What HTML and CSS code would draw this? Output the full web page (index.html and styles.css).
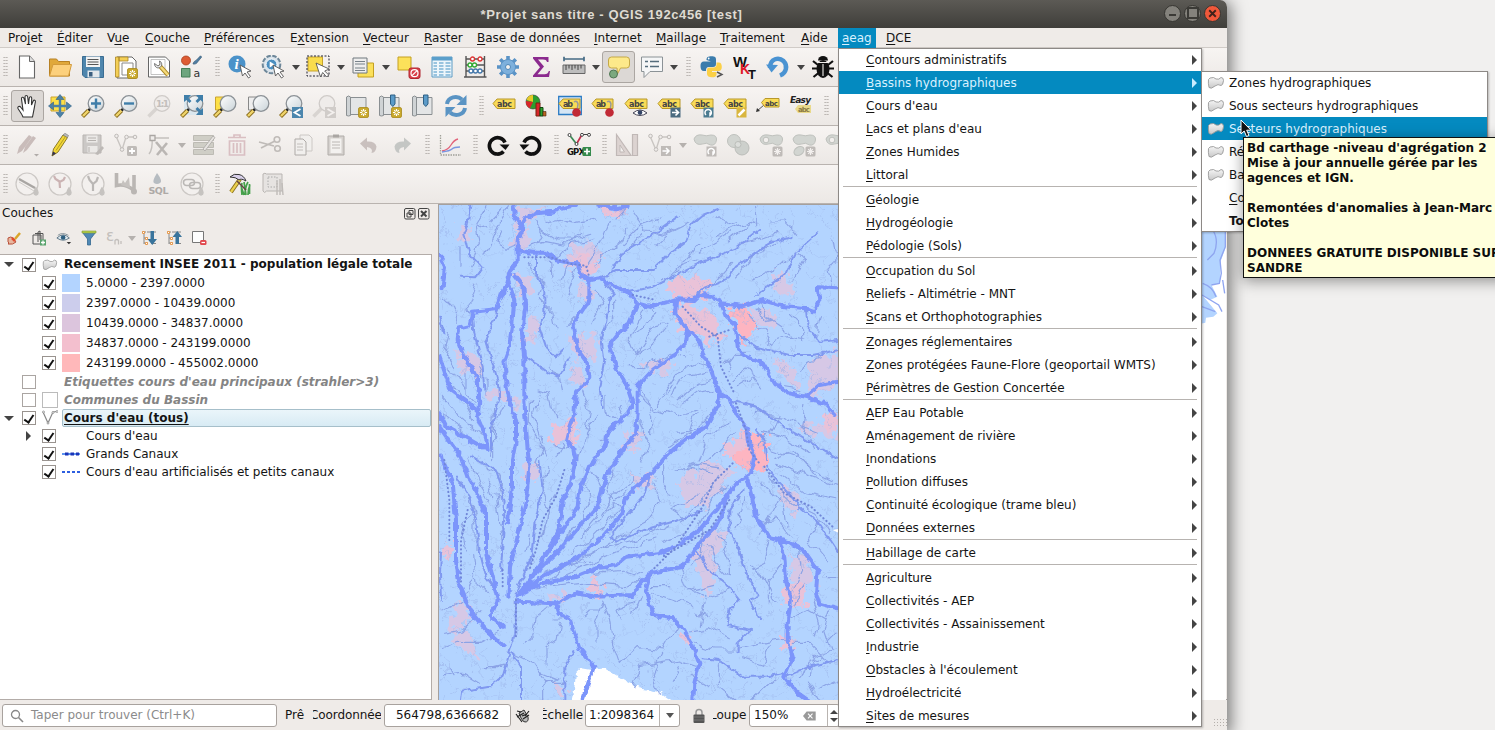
FILE: index.html
```html
<!DOCTYPE html>
<html lang="fr">
<head>
<meta charset="utf-8">
<title>*Projet sans titre - QGIS 192c456 [test]</title>
<link rel="stylesheet" href="styles.css">
</head>
<body>
<svg class="defs" width="0" height="0">
<defs>
<linearGradient id="lens" x1="0" y1="0" x2="1" y2="1"><stop offset="0" stop-color="#fff"/><stop offset="1" stop-color="#c9d3d8"/></linearGradient>
<linearGradient id="poly" x1="0" y1="0" x2="0" y2="1"><stop offset="0" stop-color="#f4f4f4"/><stop offset="1" stop-color="#c8c8c8"/></linearGradient>
<symbol id="cur" viewBox="0 0 24 24"><path d="M12 10l2.500 11 2.500-3 3.500 5 2-1.500-3.500-4.500 4-1z" fill="#fff" stroke="#555" stroke-width=".9"/></symbol>
<symbol id="star" viewBox="0 0 24 24"><rect x="13.500" y="13.500" width="10" height="10" rx="1.500" fill="#c9a92c" stroke="#a8891a" stroke-width=".8"/><path d="M18.500 15v7M15 18.500h7M16.200 16.200l4.600 4.600M20.800 16.200l-4.600 4.600" stroke="#fff" stroke-width="1.200"/><circle cx="18.500" cy="18.500" r="1.300" fill="#c9a92c"/></symbol>
<symbol id="gstar" viewBox="0 0 24 24"><rect x="13.500" y="13.500" width="10" height="10" rx="1.500" fill="#bfbbb8"/><path d="M18.500 15v7M15 18.500h7M16.200 16.200l4.600 4.600M20.800 16.200l-4.600 4.600" stroke="#f3f0ee" stroke-width="1.200"/></symbol>
<symbol id="mag" viewBox="0 0 24 24"><path d="M1.500 22.500l6-6" stroke="#8a6d1c" stroke-width="4.200"/><path d="M2 22l5.500-5.500" stroke="#f0d56c" stroke-width="2.400"/><path d="M7.500 16.500l2.300-2.300" stroke="#222" stroke-width="2.600"/><circle cx="15" cy="9.500" r="7.800" fill="url(#lens)" stroke="#8b9196" stroke-width="1.300"/></symbol>
<symbol id="gmag" viewBox="0 0 24 24"><path d="M1.500 22.500l8-8" stroke="#d8d4d1" stroke-width="3.500"/><circle cx="15" cy="9.500" r="7.800" fill="#efecea" stroke="#cfcbc8" stroke-width="1.300"/></symbol>
<symbol id="new" viewBox="0 0 24 24"><path d="M4.500 1h10l5 5.500V23h-15z" fill="#fff" stroke="#666" stroke-width="1.100"/><path d="M14.500 1v5.500h5" fill="#ddd" stroke="#666"/></symbol>
<symbol id="open" viewBox="0 0 24 24"><path d="M1.500 21V4h7l2 2.500h11V21z" fill="#e0a83a" stroke="#b78124"/><path d="M1.500 21L5 9.500h18.500L20.500 21z" fill="#fcd07c" stroke="#d39b3c"/></symbol>
<symbol id="save" viewBox="0 0 24 24"><path d="M1.500 1.500h21v21H4l-2.500-2.500z" fill="#4f86ad" stroke="#3b6d92"/><path d="M5 1.500h14V12H5z" fill="#f3f3f3"/><path d="M6.500 4.500h11M6.500 7h11M6.500 9.500h11" stroke="#555"/><path d="M6.500 15.500h12v7h-12z" fill="#e3e8ec"/><path d="M8 17h3.500v4.500H8z" fill="#3b5f80"/></symbol>
<symbol id="layout" viewBox="0 0 24 24"><path d="M3 2h15l4 4v17H3z" fill="#fff" stroke="#666"/><path d="M1.500 2h3.500v20H1.500zM5 2h9v4H5z" fill="#f4cf56" stroke="#a98523" stroke-width=".8"/><path d="M8 8h11v12H8z" fill="none" stroke="#888"/><use href="#star"/></symbol>
<symbol id="layoutmgr" viewBox="0 0 24 24"><path d="M1.500 2h17l4 4v16h-21z" fill="#fff" stroke="#666"/><path d="M4 4.500h14v15H4z" fill="none" stroke="#aaa" stroke-width=".7"/><path d="M12 10l9 10" stroke="#a98523" stroke-width="4.200"/><path d="M13 11l8 9" stroke="#f4da7a" stroke-width="2.600"/><path d="M7.500 8.500c0 4 3.500 5.500 6 3.500 2-1.700 1.500-5-1-6l.5 3.500-2 1.500z" fill="#eee" stroke="#555" stroke-width=".8"/></symbol>
<symbol id="style" viewBox="0 0 24 24"><circle cx="6" cy="5.500" r="4.500" fill="#dd5b33" stroke="#a83f1e" stroke-width=".8"/><path d="M1.500 13.500h8.500V22H1.500z" fill="#6da57e" stroke="#447d57"/><path d="M13 9c.5-2.500 2-3 3.500-4L20.500.800l1.200 1.200L18 6.500c-1 1.500-2 3-5 2.500z" fill="#4f7ea3" stroke="#3c5d78" stroke-width=".7"/><text x="13.500" y="21.500" font-size="11" fill="#333">a</text></symbol>
<symbol id="ident" viewBox="0 0 24 24"><circle cx="9" cy="9" r="8.500" fill="#4b92c9"/><text x="6.500" y="14" font-family="Liberation Serif" font-style="italic" font-weight="bold" font-size="15" fill="#fff">i</text><use href="#cur"/></symbol>
<symbol id="action" viewBox="0 0 24 24"><circle cx="10.500" cy="9.500" r="8.800" fill="#d8e2ea" stroke="#6d8799" stroke-width="2" stroke-dasharray="4.500 1.500"/><circle cx="10.500" cy="9.500" r="5.500" fill="#4b8fc0" stroke="#fff"/><path d="M8.700 6.500l5 3-5 3z" fill="#fff"/><use href="#cur"/></symbol>
<symbol id="select" viewBox="0 0 24 24"><path d="M2 2h14.500v14H2z" fill="#f9dc4d" stroke="#c7a42c"/><path d="M1 1h22v20H1z" fill="none" stroke="#223" stroke-width="1" stroke-dasharray="2 1.500"/><path d="M10 8l4.500 14 2.200-4.500 4 4.500 2-2-4-4 4.500-2z" fill="#fff" stroke="#555" stroke-width=".9"/></symbol>
<symbol id="form" viewBox="0 0 24 24"><path d="M7 8h15.500v14H7z" fill="#fbe05a" stroke="#c4a021"/><path d="M2 3h14v15H2z" fill="#eee" stroke="#71797f"/><path d="M4 6.500h10M4 9h10M4 13h10M4 15.500h10" stroke="#77828a"/></symbol>
<symbol id="desel" viewBox="0 0 24 24"><path d="M1 2h13v13H1z" fill="#fce15a" stroke="#c4a021"/><rect x="12" y="13" width="11" height="10.500" rx="2" fill="#d9414b" stroke="#b02630"/><circle cx="17.500" cy="18.200" r="3.500" fill="none" stroke="#fff" stroke-width="1.200"/><path d="M15 20.700l5-5" stroke="#fff" stroke-width="1.200"/></symbol>
<symbol id="table" viewBox="0 0 24 24"><path d="M2 2h20v20H2z" fill="#eef6fb" stroke="#5a9bc4"/><path d="M2 2h20v3.500H2z" fill="#5b9fcb"/><path d="M3.500 8h3.500M9 8h4.500M15.500 8h5M3.500 11h3.500M9 11h4.500M15.500 11h5M3.500 14h3.500M9 14h4.500M15.500 14h5M3.500 17h3.500M9 17h4.500M15.500 17h5M3.500 20h3.500M9 20h4.500M15.500 20h5" stroke="#7db4d6" stroke-width="1.300"/></symbol>
<symbol id="abacus" viewBox="0 0 24 24"><path d="M3 1v21M21.500 1v21M1 22h22.500M3 4h18M3 10h18M3 16h18" fill="none" stroke="#555" stroke-width="1.400"/><g fill="#fff" stroke-width="1.300"><g stroke="#d33"><circle cx="9.500" cy="4" r="2"/><circle cx="17" cy="4" r="2"/></g><g stroke="#3a3"><circle cx="7" cy="10" r="2"/><circle cx="11.500" cy="10" r="2"/></g><g stroke="#47a"><circle cx="8" cy="16" r="2"/><circle cx="12.500" cy="16" r="2"/><circle cx="17" cy="16" r="2"/></g></g></symbol>
<symbol id="gear" viewBox="0 0 24 24"><path d="M12 1v22M1 12h22M4.200 4.200l15.600 15.600M19.800 4.200L4.200 19.800" stroke="#5a93c6" stroke-width="3.600"/><circle cx="12" cy="12" r="7.500" fill="#7db0dc" stroke="#5a93c6"/><circle cx="12" cy="12" r="2.500" fill="#f4f2f0" stroke="#4d86b8"/></symbol>
<symbol id="sigma" viewBox="0 0 24 24"><path d="M4 2h15.500v5H18c-.6-2-1.600-2.600-4-2.600H9l6 7.200-6.500 7.600h7c2.500 0 3.500-1 4.300-3.200H21L20 22H4v-1.500l7-8.300L4 3.500z" fill="#8b2a8e"/></symbol>
<symbol id="ruler" viewBox="0 0 24 24"><path d="M2 4h20M2 1.800v4.500M22 1.800v4.500" stroke="#456b85" stroke-width="1.700"/><path d="M1 10h22v8.500H1z" fill="#bdbdbd" stroke="#666"/><path d="M4 10v5M7 10v3.500M10 10v5M13 10v3.500M16 10v5M19 10v3.500" stroke="#444"/></symbol>
<symbol id="tip" viewBox="0 0 24 24"><path d="M4.500 2h15q3 0 3 3v5q0 3-3 3h-6l-3 6-.5-6H4.500q-3 0-3-3V5q0-3 3-3z" fill="#fde98a" stroke="#c5a947"/><circle cx="6.500" cy="19" r="4" fill="#7ba97f" stroke="#4f7653"/></symbol>
<symbol id="annot" viewBox="0 0 24 24"><path d="M1.500 2h21v14.500H10l-6 6v-6H1.500z" fill="#f5f6f7" stroke="#8b9296"/><path d="M5 6.500h3M10 6.500h9M5 11.500h3M10 11.500h9" stroke="#546c7c" stroke-width="1.600"/></symbol>
<symbol id="python" viewBox="0 0 24 24"><path d="M6.500 5c0-3 1.500-3.800 5-3.800S16 2 16 4.500V9c0 2-1 3-3 3H9c-2.500 0-3 1.500-3 4H4c-2.500 0-3.500-2-3.500-5s1-4.500 3.500-4.500h7" fill="#3b7cac"/><path d="M16.500 7.500h2.300c2.200 0 3 2 3 4.500 0 2-1 4-3 4H12v1h4.500v2.500c0 2-2 2.800-4.700 2.800S7 21 7 19v-4c0-1.800 1.200-2.500 3-2.500h3.500c2 0 3-1.200 3-3z" fill="#fbd046"/><circle cx="8.700" cy="3.500" r=".9" fill="#fff"/><path d="M17 17l5 2.500-5 2.500" fill="none" stroke="#555" stroke-width="1.400"/></symbol>
<symbol id="wkt" viewBox="0 0 24 24"><g font-family="Liberation Sans" font-weight="bold"><text x="0" y="11.500" font-size="14.500" textLength="14" lengthAdjust="spacingAndGlyphs" fill="#111">W</text><text x="7" y="19" font-size="15" textLength="10" lengthAdjust="spacingAndGlyphs" fill="#e01828">K</text><text x="15" y="23.500" font-size="13" fill="#111">T</text></g></symbol>
<symbol id="undo" viewBox="0 0 24 24"><path d="M4 13C4 3 13 2 17.500 6c4.500 4.500 3 12-3.500 14.500" fill="none" stroke="#4a93d2" stroke-width="4.500"/><path d="M0 9.500l12 .5-6.500 7.500z" fill="#4a93d2"/></symbol>
<symbol id="bug" viewBox="0 0 24 24"><ellipse cx="12" cy="14" rx="6.500" ry="9" fill="#111"/><path d="M7 5.500a5 4.500 0 0 1 10 0z" fill="#111"/><path d="M2 6l5 4M22 6l-5 4M1 13.500h5M23 13.500h-5M2.500 22l5-4M21.500 22l-5-4" stroke="#111" stroke-width="2.200"/><path d="M12 9v12M7 7.500h10" stroke="#f1eeec" stroke-width="1.100"/></symbol>
<symbol id="hand" viewBox="0 0 24 24"><path d="M8 23c-1-3-4-6.500-5-8.500-.8-2 1.500-3 3-1l2 2.500L6.500 5c-.3-2 2-2.500 2.500-.6L10.500 10 10 3c0-2 2.500-2 2.700 0l.8 7 .8-6c.3-1.800 2.500-1.500 2.400.2L16.500 11l1.700-4c.8-1.500 2.500-.8 2.200.8-.7 3-1 6-1.700 9L17.500 23z" fill="#fff" stroke="#333" stroke-width="1.100"/></symbol>
<symbol id="pansel" viewBox="0 0 24 24"><path d="M3 3h14v14H3z" fill="#fde047" stroke="#caa32e"/><path d="M12 6v12M6 12h12" stroke="#4b82a8" stroke-width="2.400"/><path d="M12 .500l4 5H8zM12 23.500l4-5H8zM.500 12l5-4v8zM23.500 12l-5-4v8z" fill="#4b82a8" stroke="#2f5f82" stroke-width=".6"/></symbol>
<symbol id="zin" viewBox="0 0 24 24"><use href="#mag"/><path d="M15 4.500v10M10 9.500h10" stroke="#3f7ea9" stroke-width="2.400"/></symbol>
<symbol id="zout" viewBox="0 0 24 24"><use href="#mag"/><path d="M10 9.500h10" stroke="#3f7ea9" stroke-width="2.400"/></symbol>
<symbol id="z11" viewBox="0 0 24 24"><use href="#gmag"/><text x="9" y="13" font-size="9" font-weight="bold" fill="#c3bfbc" textLength="13">1:1</text></symbol>
<symbol id="zfull" viewBox="0 0 24 24"><path d="M4 1h19v20H4z" fill="#dbe7ee"/><use href="#mag"/><path d="M4 1h7L8.500 4l3 3-2 2-3-3L4 8zM23 1h-7l2.500 3-3 3 2 2 3-3L23 8zM23 21h-7l2.500-3-3-3 2-2 3 3L23 14z" fill="#3f7ea9"/></symbol>
<symbol id="zsel" viewBox="0 0 24 24"><path d="M2.500 3h12v13h-12z" fill="#fde047" stroke="#caa32e"/><use href="#mag"/></symbol>
<symbol id="zlay" viewBox="0 0 24 24"><path d="M2.500 3h12v13h-12z" fill="#eee" stroke="#888"/><use href="#mag"/></symbol>
<symbol id="zlast" viewBox="0 0 24 24"><use href="#mag"/><path d="M13 13h11v11H13z" fill="#4b86ad"/><path d="M21.500 15l-6 3.500 6 3.500" fill="none" stroke="#fff" stroke-width="1.800"/></symbol>
<symbol id="znext" viewBox="0 0 24 24"><use href="#gmag"/><path d="M13 13h11v11H13z" fill="#d0ccc9"/><path d="M15.500 15l6 3.500-6 3.500" fill="none" stroke="#f3f0ee" stroke-width="1.800"/></symbol>
<symbol id="map" viewBox="0 0 24 24"><path d="M5 3.500h16v17H5z" fill="#e3e5e6" stroke="#8a8f92"/><path d="M1.500 3q2-2 4 0v18.500q-2 1-4 0z" fill="#cfd3d5" stroke="#8a8f92"/></symbol>
<symbol id="newmap" viewBox="0 0 24 24"><use href="#map"/><use href="#star"/></symbol>
<symbol id="mark" viewBox="0 0 24 24"><path d="M12.500 1h4.500v9l-2.200 2.500-2.300-2.500z" fill="#5b9bc9" stroke="#2f6085"/></symbol>
<symbol id="newbm" viewBox="0 0 24 24"><use href="#map"/><use href="#mark"/><use href="#star"/></symbol>
<symbol id="bm" viewBox="0 0 24 24"><use href="#map"/><use href="#mark"/></symbol>
<symbol id="refresh" viewBox="0 0 24 24"><path d="M3 10C4 3 13 1 18 5.500M21 14c-1 7-10 9-15 4.500" fill="none" stroke="#5a94c4" stroke-width="4"/><path d="M22.500 1v10h-10zM1.500 23V13h10z" fill="#5a94c4"/></symbol>
<symbol id="abc" viewBox="0 0 24 24"><path d="M1 9.500l4-4.500h18v9.500H5z" fill="#f9db57" stroke="#b8982a"/><text x="5" y="12.500" font-size="8" font-weight="bold" fill="#444" textLength="15">abc</text></symbol>
<symbol id="ab" viewBox="0 0 24 24"><path d="M1 9.500l4-4.500h17v9.500H5z" fill="#f9db57" stroke="#b8982a"/><text x="5" y="12.500" font-size="8" font-weight="bold" fill="#444" textLength="10">ab</text></symbol>
<symbol id="dia" viewBox="0 0 24 24"><circle cx="8" cy="8" r="7" fill="#2ba02f" stroke="#333" stroke-width=".6"/><path d="M8 8V1a7 7 0 0 0-6.500 5z" fill="#e6c829"/><path d="M8 8L5 14.300A7 7 0 0 1 1 7z" fill="#d8262b"/><path d="M11 9h4v13h-4z" fill="#d8262b" stroke="#721"/><path d="M15 13.500h3v8.500h-3z" fill="#2ba02f" stroke="#141"/><path d="M18 17.500h3v4.500h-3z" fill="#b62" stroke="#421" stroke-width=".6"/></symbol>
<symbol id="pin" viewBox="0 0 24 24"><path d="M16 8q3-2 4 2l-1 7" fill="none" stroke="#999" stroke-width="1.500"/><circle cx="18.500" cy="18.500" r="4.300" fill="#c12a36"/></symbol>
<symbol id="abpinb" viewBox="0 0 24 24"><path d="M.7 2.500h22.600v18H.7z" fill="#d5e6f5" stroke="#2b7bc4" stroke-width="1.300"/><use href="#ab"/><use href="#pin"/></symbol>
<symbol id="abpin" viewBox="0 0 24 24"><use href="#ab"/><use href="#pin"/></symbol>
<symbol id="abeye" viewBox="0 0 24 24"><use href="#abc"/><path d="M9 19q7-6 14 0q-7 5-14 0z" fill="#fff" stroke="#445"/><circle cx="16" cy="18.600" r="2.300" fill="#346"/></symbol>
<symbol id="abmove" viewBox="0 0 24 24"><use href="#abc"/><path d="M13.500 13.500h10v10h-10z" fill="#4b6b80"/><path d="M15 18.500h6M18.500 15.500l3 3-3 3" fill="none" stroke="#fff" stroke-width="1.700"/></symbol>
<symbol id="abrot" viewBox="0 0 24 24"><use href="#abc"/><path d="M13.500 13.500h10v10h-10z" fill="#4b7b90"/><path d="M16 21a3.200 3.200 0 1 1 4 .3v-3" fill="none" stroke="#fff" stroke-width="1.500"/></symbol>
<symbol id="abedit" viewBox="0 0 24 24"><use href="#abc"/><path d="M13.500 13.500h10v10h-10z" fill="#d9b63f"/><path d="M15.500 21.500l6-6" stroke="#fff" stroke-width="2.500"/></symbol>
<symbol id="abline" viewBox="0 0 24 24"><path d="M1 17l7-6" stroke="#555"/><path d="M0 18l1-4 3 3z" fill="#333"/><path d="M5.500 8.500L9 4.500h14V13H9z" fill="#f9db57" stroke="#b8982a"/><text x="9" y="11.500" font-size="7" font-weight="bold" fill="#444" textLength="13">abc</text></symbol>
<symbol id="easy" viewBox="0 0 24 24"><text x="1" y="8.500" font-size="9" font-weight="bold" font-style="italic" fill="#222" textLength="21">Easy</text><path d="M6 15l3-4h13v8H9z" fill="#ead98a"/><text x="9" y="17.500" font-size="7" font-weight="bold" fill="#8a7b45" textLength="12">abc</text></symbol>
<symbol id="gpens" viewBox="0 0 24 24"><path d="M2 21l2-7L14 2l3 2L7 18zM8 20l2-6 8-11 3 2-9 12z" fill="#c9bcba"/><path d="M19 21h5l-2.500 2.500z" fill="#b0aba8"/></symbol>
<symbol id="pen" viewBox="0 0 24 24"><path d="M4 23l1.500-7L15 2l4.500 2.500L10 19z" fill="#f3d737" stroke="#8b7a28"/><path d="M15 2l4.500 2.500 1-2L17 .3z" fill="#bbb" stroke="#777" stroke-width=".6"/><path d="M8 17.500L17.500 3.500" stroke="#b49f22"/><path d="M4 23l1-4.500 3 1.800z" fill="#335"/></symbol>
<symbol id="gsave" viewBox="0 0 24 24"><path d="M2 2h18v18H2z" fill="#cbc8c6" stroke="#b9b5b2"/><path d="M5.500 2.500h11v7h-11zM6.500 13h10v6.500h-10z" fill="#ebe9e7"/><path d="M7 5h8M7 7.500h8M8 14v5" stroke="#b5b1ae"/><path d="M14 21l7-8 2 2-6 7z" fill="#bdb9b6"/></symbol>
<symbol id="gvec" viewBox="0 0 24 24"><path d="M2 3l6 14 4-13h9" fill="none" stroke="#c9c5c2" stroke-width="1.400"/><g fill="#efecea" stroke="#bfbbb8"><circle cx="2.500" cy="3" r="1.800"/><circle cx="8" cy="16.500" r="1.800"/><circle cx="12.500" cy="4" r="1.800"/><circle cx="21" cy="4" r="1.800"/></g></symbol>
<symbol id="gvecadd" viewBox="0 0 24 24"><use href="#gvec"/><rect x="13" y="13" width="10" height="10" rx="1.500" fill="#bfbbb8"/><path d="M18 15v6M15 18h6" stroke="#fff" stroke-width="1.800"/></symbol>
<symbol id="gvecmv" viewBox="0 0 24 24"><use href="#gvec"/><path d="M13 13h10v10H13z" fill="#bfbbb8"/><path d="M14.500 18h6M18 15l3 3-3 3" fill="none" stroke="#fff" stroke-width="1.500"/></symbol>
<symbol id="gvert" viewBox="0 0 24 24"><path d="M2 21Q6 16 5 5h17" fill="none" stroke="#c4c0bd" stroke-width="1.400"/><path d="M3 2.500h5v5H3z" fill="#efecea" stroke="#aaa6a3" stroke-width="1.300"/><path d="M9 9l11 13M20 10L10 22" stroke="#bab6b3" stroke-width="2.600"/></symbol>
<symbol id="gmulti" viewBox="0 0 24 24"><path d="M1.500 2.500h20v5h-20zM1.500 9.500h20v5h-20zM1.500 16.500h20v5h-20z" fill="#cfcec6" stroke="#bdbbb4"/><path d="M11 16L21 3l2 1.500L13 18z" fill="#e6e3e0" stroke="#aaa7a4" stroke-width=".8"/></symbol>
<symbol id="gtrash" viewBox="0 0 24 24"><path d="M4.500 8h15v14h-15zM3 4.500h18M9 4.500V2h6v2.500M8.500 10v10M12 10v10M15.500 10v10" fill="none" stroke="#d9bfc2" stroke-width="1.700"/></symbol>
<symbol id="gcut" viewBox="0 0 24 24"><path d="M1 9l15 4M3 15l14-7" stroke="#bfbbb8" stroke-width="1.800"/><circle cx="19" cy="6.500" r="2.800" fill="none" stroke="#bfbbb8" stroke-width="1.600"/><circle cx="19.500" cy="15.500" r="2.800" fill="none" stroke="#bfbbb8" stroke-width="1.600"/></symbol>
<symbol id="gcopy" viewBox="0 0 24 24"><path d="M9 2h9l3 3v13H9z" fill="#f1efed" stroke="#ccc8c5"/><path d="M4 6h8l3 3v13H4z" fill="#f1efed" stroke="#aeaaa7"/><path d="M6 11h6M6 14h6M6 17h6" stroke="#c2bebb"/></symbol>
<symbol id="gpaste" viewBox="0 0 24 24"><path d="M4 3h16v19H4z" fill="#d5d1ce" stroke="#b1ada9"/><path d="M6.500 5.500h11v14.500h-11z" fill="#f3f1ef"/><path d="M9 1.500h6v3H9z" fill="#aaa6a3"/><path d="M8 9h8M8 12h8M8 15h8" stroke="#bbb7b4"/></symbol>
<symbol id="gundo" viewBox="0 0 24 24"><path d="M3 10.500L10 4.500v4q8-.5 9.500 5-.5 6-5 6.500 2-5-4.500-6v3.500z" fill="#c9c0be"/></symbol>
<symbol id="gredo" viewBox="0 0 24 24"><path d="M21 10.500L14 4.500v4q-8-.5-9.500 5 .5 6 5 6.500-2-5 4.500-6v3.500z" fill="#c4c6c4"/></symbol>
<symbol id="chart" viewBox="0 0 24 24"><path d="M2.500 2v20H23" fill="none" stroke="#a0a098" stroke-width="1.300" stroke-dasharray="1.500 1"/><path d="M4 18q6-1 9-6t7-6" fill="none" stroke="#e2637a" stroke-width="1.300"/><path d="M4 19q8-1 10-3t8-2" fill="none" stroke="#7b96e0" stroke-width="1.300"/></symbol>
<symbol id="rotr" viewBox="0 0 24 24"><path d="M17.500 18.500A8.200 8.200 0 1 1 19 9.500" fill="none" stroke="#111" stroke-width="3.600"/><path d="M13.500 11.500h10l-4 5.500z" fill="#111"/></symbol>
<symbol id="rotl" viewBox="0 0 24 24"><path d="M6.500 18.500A8.200 8.200 0 1 0 5 9.500" fill="none" stroke="#111" stroke-width="3.600"/><path d="M10.500 11.500H.500l4 5.500z" fill="#111"/></symbol>
<symbol id="gpx" viewBox="0 0 24 24"><path d="M2.500 2l7 9" stroke="#3a8a55" stroke-width="1.700"/><path d="M9.500 11L15 1.500" stroke="#c3304d" stroke-width="1.700"/><path d="M15 1.500h7" stroke="#444"/><g fill="#fff" stroke="#444"><circle cx="2.500" cy="2" r="1.500"/><circle cx="9.500" cy="11" r="1.500"/><circle cx="15" cy="1.800" r="1.500"/><circle cx="22" cy="1.800" r="1.500"/></g><text x="0" y="22" font-size="8.500" font-weight="bold" fill="#111" textLength="18">GPX</text><rect x="15.500" y="14" width="9" height="9" rx="1" fill="#358a4c"/><path d="M20 15.500v6M17 18.500h6" stroke="#fff" stroke-width="1.700"/></symbol>
<symbol id="gtri" viewBox="0 0 24 24"><path d="M1.500 1.500L16 22.500H1.500zM17.500 1.500h5v21h-5z" fill="#dcd3d1" stroke="#c0b8b6" stroke-width="1.200"/><path d="M5 12l4.500 7H5z" fill="#f3f0ee" stroke="#c0b8b6"/></symbol>
<symbol id="gblob" viewBox="0 0 24 24"><path d="M1 6q2-5 8-4 4 1.500 9 0 6 0 5.500 5-1 6-6 5-4-3-8-1-7 2-8.500-5z" fill="#d2d5d1" stroke="#bfc1bd"/></symbol>
<symbol id="gb1" viewBox="0 0 24 24"><use href="#gblob"/><path d="M13.500 13.500h10v10h-10z" fill="#bfbbb8"/><path d="M16 21a3.200 3.200 0 1 1 4 .3v-3" fill="none" stroke="#fff" stroke-width="1.500"/></symbol>
<symbol id="gb2" viewBox="0 0 24 24"><circle cx="8" cy="8" r="6.500" fill="#d2d5d1" stroke="#bfc1bd"/><circle cx="16" cy="15" r="7" fill="#cdd0cc" stroke="#bbbdb9"/><circle cx="12" cy="11.500" r="3" fill="#dcdedb" stroke="#bbbdb9"/></symbol>
<symbol id="gb3" viewBox="0 0 24 24"><use href="#gblob"/><circle cx="7" cy="7" r="2.800" fill="#f2efed" stroke="#bfc1bd"/><use href="#gstar"/></symbol>
<symbol id="gb4" viewBox="0 0 24 24"><use href="#gblob"/><ellipse cx="7" cy="18" rx="5.500" ry="4" fill="#d2d5d1" stroke="#bfc1bd" transform="rotate(-35 7 18)"/><use href="#gstar"/></symbol>
<symbol id="gcirc" viewBox="0 0 24 24"><circle cx="12" cy="12" r="11" fill="#f3f0ee" stroke="#ccc8c5" stroke-width="1.200"/><path d="M21 16q4 6 0 7-4-1 0-7z" fill="#c6c3c0" stroke="#c6c3c0" stroke-width="1.500"/></symbol>
<symbol id="gc1" viewBox="0 0 24 24"><use href="#gcirc"/><path d="M4 7l16 9" stroke="#a9a6a3" stroke-width="2.300"/><path d="M4 10l15 9" stroke="#cfccc9"/></symbol>
<symbol id="gc2" viewBox="0 0 24 24"><use href="#gcirc"/><path d="M6 4l1.500 3 4 2.500L12 16M17 5l-1.500 3-4 2" fill="none" stroke="#cbb3b3" stroke-width="2.200"/></symbol>
<symbol id="gc3" viewBox="0 0 24 24"><use href="#gcirc"/><path d="M7 4l1.500 4 3.500 4v7M17 5l-1.500 4-3.500 3" fill="none" stroke="#bab7b5" stroke-width="2.200"/></symbol>
<symbol id="gw" viewBox="0 0 24 24"><path d="M2.500 1v12.500q9-2 17.500 5V3" fill="none" stroke="#bab6b3" stroke-width="3.600"/><path d="M7 13l2-5 2 3 4-6 1 11z" fill="#c6c2bf"/><circle cx="20" cy="19.500" r="3" fill="#bab6b3"/></symbol>
<symbol id="gsql" viewBox="0 0 24 24"><path d="M10 1q6 8 3 10-3 2-6 0-2-2 3-10z" fill="#b6bcc1"/><text x="1.500" y="22" font-size="9.500" font-weight="bold" fill="#aeaaa7" textLength="20">SQL</text></symbol>
<symbol id="gc4" viewBox="0 0 24 24"><use href="#gcirc"/><rect x="3.500" y="7.500" width="11" height="6" rx="3" fill="none" stroke="#bab7b5" stroke-width="1.500"/><rect x="9.500" y="10.500" width="11" height="6" rx="3" fill="none" stroke="#bab7b5" stroke-width="1.500"/></symbol>
<symbol id="reed" viewBox="0 0 24 24"><path d="M14 23q-1-8 0-12M17 23q0-8 3-13M20 23q0-6 2-10M16 23l-3-9M18 23l-2-13M21.500 22V12" fill="none" stroke="#46a04b" stroke-width="1.700"/><path d="M3 20L12 7" stroke="#8a701c" stroke-width="4"/><path d="M3 20L12 7" stroke="#ecd14e" stroke-width="2.200"/><path d="M2 5q4-4 9-2.500 5 1 7 6.500-5-3-7-1-3-3-9-3z" fill="#d7cfe8" stroke="#333"/><path d="M9 9l9 9" stroke="#644" stroke-width="1.500"/></symbol>
<symbol id="greed" viewBox="0 0 24 24"><path d="M2 2q2-1.500 3.500 0H21v17H5.500q-2 3-3.500 0z" fill="#e6e3e1" stroke="#b9b5b2"/><path d="M7 5h9v10H7z" fill="none" stroke="#aaa" stroke-dasharray="1.500 1.500"/><path d="M16 23V9M19 23V7M22 23l-1-12" stroke="#bfbbb8" stroke-width="1.400"/></symbol>
<symbol id="polyl" viewBox="0 0 18 14"><path d="M3 2q4-1.500 6 1 3 1 5-1.500 2.500 0 2.500 3-.5 5-2.500 5-3-2-6 .5Q4 13.500 2 11.500 1 7 1.500 3.500z" fill="url(#poly)" stroke="#999" stroke-width=".9"/></symbol>
<symbol id="brush" viewBox="0 0 16 16"><path d="M2 8q3-2 5 0l3 4q-3 3-8 2 2-1 0-2z" fill="#e8b7a0" stroke="#b8523b"/><path d="M6 8l3 3" stroke="#e04d2e" stroke-width="2.500"/><path d="M9 9l5-6" stroke="#d9a52a" stroke-width="2.500"/></symbol>
<symbol id="addg" viewBox="0 0 16 16"><path d="M2 5h8v9H2zM4 3.500h8M12 3.500V11M7 12V2l2-1v9" fill="none" stroke="#555"/><rect x="9" y="9.500" width="6" height="6" fill="#5aa36d"/><path d="M12 10.500v4M10 12.500h4" stroke="#fff" stroke-width="1.300"/></symbol>
<symbol id="eye" viewBox="0 0 18 16"><path d="M1 8q7-7 14 0-7 5-14 0z" fill="#dfe9ef" stroke="#556f80"/><circle cx="8" cy="7.500" r="2.600" fill="#2e5f80"/><path d="M2 5q5-4 12 0" fill="none" stroke="#7d8b93"/><path d="M12 12.500h5L14.500 15z" fill="#333"/></symbol>
<symbol id="filter" viewBox="0 0 16 16"><path d="M1.500 2.500L6.500 9v6h3V9l5-6.500z" fill="#4f88b5" stroke="#34678f" stroke-width=".8"/><path d="M1 1h14v2H1z" fill="#b8d34c" stroke="#7e9431" stroke-width=".6"/></symbol>
<symbol id="eps" viewBox="0 0 18 16"><text x="0" y="11" font-size="15" fill="#c3bfbc">ε</text><path d="M9 14.500v-4q2-2 3.500 0v4M15 14v-3" fill="none" stroke="#c3bfbc" stroke-width="1.300"/></symbol>
<symbol id="down" viewBox="0 0 16 16"><path d="M1 2h4M3 2v12M3 8h4M3 13h4M6 2h9M10 13.500h5" stroke="#888" fill="none"/><path d="M1.500 1.500h2v2h-2zM4.500 7.500h2v2h-2zM4.500 12.500h2v2h-2z" fill="#fff" stroke="#e79a4e"/><path d="M9.500 1h3.500v8H16l-4.700 6L6.500 9h3z" fill="#39749c"/></symbol>
<symbol id="up" viewBox="0 0 16 16"><path d="M1 2h4M3 2v12M3 8h4M3 13h4M6 2h9M10 13.500h5" stroke="#888" fill="none"/><path d="M1.500 1.500h2v2h-2zM4.500 7.500h2v2h-2zM4.500 12.500h2v2h-2z" fill="#fff" stroke="#e79a4e"/><path d="M9.500 14h3.500V7H16L11.300 1 6.500 7h3z" fill="#39749c"/></symbol>
<symbol id="rem" viewBox="0 0 16 16"><path d="M1.500 1.500h11v11h-11z" fill="#fdfdfd" stroke="#777"/><rect x="9" y="10" width="6.500" height="5" rx="1.500" fill="#e0474c"/><path d="M10.500 12.500h3.500" stroke="#fff" stroke-width="1.200"/></symbol>
</defs>
</svg>

<main class="screen">
<section class="window">
<header class="titlebar"><span class="title">*Projet sans titre - QGIS 192c456 [test]</span>
<span class="controls"><i class="wb min"></i><i class="wb max"></i><i class="wb close"><svg viewBox="0 0 16 16"><path d="M4.500 4.500l7 7M11.500 4.500l-7 7" stroke="#40211a" stroke-width="2"/></svg></i></span></header>
<nav class="menubar"><span>Pro<u>j</u>et</span><span><u>É</u>diter</span><span>V<u>u</u>e</span><span><u>C</u>ouche</span><span><u>P</u>références</span><span>E<u>x</u>tension</span><span><u>V</u>ecteur</span><span><u>R</u>aster</span><span><u>B</u>ase de données</span><span><u>I</u>nternet</span><span><u>M</u>aillage</span><span><u>T</u>raitement</span><span><u>A</u>ide</span><span class="on"><u>a</u>eag</span><span><u>D</u>CE</span></nav>

<div class="bar"><i class="h first"></i><b><svg><use href="#new"/></svg></b><b><svg><use href="#open"/></svg></b><b><svg><use href="#save"/></svg></b><b><svg><use href="#layout"/></svg></b><b><svg><use href="#layoutmgr"/></svg></b><b><svg><use href="#style"/></svg></b><i class="h"></i><b><svg><use href="#ident"/></svg></b><b><svg><use href="#action"/></svg></b><i class="dd"></i><b><svg><use href="#select"/></svg></b><i class="dd"></i><b><svg><use href="#form"/></svg></b><i class="dd"></i><b><svg><use href="#desel"/></svg></b><b><svg><use href="#table"/></svg></b><b><svg><use href="#abacus"/></svg></b><b><svg><use href="#gear"/></svg></b><b><svg><use href="#sigma"/></svg></b><b><svg><use href="#ruler"/></svg></b><i class="dd"></i><b class="on"><svg><use href="#tip"/></svg></b><b><svg><use href="#annot"/></svg></b><i class="dd"></i><i class="h"></i><b><svg><use href="#python"/></svg></b><b><svg><use href="#wkt"/></svg></b><b><svg><use href="#undo"/></svg></b><i class="dd"></i><b><svg><use href="#bug"/></svg></b></div>

<div class="bar"><i class="h first"></i><b class="on"><svg><use href="#hand"/></svg></b><b><svg><use href="#pansel"/></svg></b><b><svg><use href="#zin"/></svg></b><b><svg><use href="#zout"/></svg></b><b><svg><use href="#z11"/></svg></b><b><svg><use href="#zfull"/></svg></b><b><svg><use href="#zsel"/></svg></b><b><svg><use href="#zlay"/></svg></b><b><svg><use href="#zlast"/></svg></b><b><svg><use href="#znext"/></svg></b><b><svg><use href="#newmap"/></svg></b><b><svg><use href="#newbm"/></svg></b><b><svg><use href="#bm"/></svg></b><b><svg><use href="#refresh"/></svg></b><i class="h"></i><b><svg><use href="#abc"/></svg></b><b><svg><use href="#dia"/></svg></b><b><svg><use href="#abpinb"/></svg></b><b><svg><use href="#abpin"/></svg></b><b><svg><use href="#abeye"/></svg></b><b><svg><use href="#abmove"/></svg></b><b><svg><use href="#abrot"/></svg></b><b><svg><use href="#abedit"/></svg></b><b><svg><use href="#abline"/></svg></b><b><svg><use href="#easy"/></svg></b><i class="h"></i></div>

<div class="bar"><i class="h first"></i><b><svg><use href="#gpens"/></svg></b><b><svg><use href="#pen"/></svg></b><b><svg><use href="#gsave"/></svg></b><b><svg><use href="#gvecadd"/></svg></b><b><svg><use href="#gvert"/></svg></b><i class="dd off"></i><b><svg><use href="#gmulti"/></svg></b><b><svg><use href="#gtrash"/></svg></b><b><svg><use href="#gcut"/></svg></b><b><svg><use href="#gcopy"/></svg></b><b><svg><use href="#gpaste"/></svg></b><b><svg><use href="#gundo"/></svg></b><b><svg><use href="#gredo"/></svg></b><i class="h"></i><b><svg><use href="#chart"/></svg></b><i class="h"></i><b><svg><use href="#rotr"/></svg></b><b><svg><use href="#rotl"/></svg></b><i class="h"></i><b><svg><use href="#gpx"/></svg></b><i class="h"></i><b><svg><use href="#gtri"/></svg></b><b><svg><use href="#gvecmv"/></svg></b><i class="dd off"></i><b><svg><use href="#gb1"/></svg></b><b><svg><use href="#gb2"/></svg></b><b><svg><use href="#gb3"/></svg></b><b><svg><use href="#gb4"/></svg></b><b><svg><use href="#gb3"/></svg></b></div>

<div class="bar"><i class="h first"></i><b><svg><use href="#gc1"/></svg></b><b><svg><use href="#gc2"/></svg></b><b><svg><use href="#gc3"/></svg></b><b><svg><use href="#gw"/></svg></b><b><svg><use href="#gsql"/></svg></b><b><svg><use href="#gc4"/></svg></b><i class="h"></i><b><svg><use href="#reed"/></svg></b><b><svg><use href="#greed"/></svg></b></div>

<div class="work">
<aside class="panel">
<div class="ptitle"><span>Couches</span><svg class="pbtn" viewBox="0 0 26 12"><g fill="none" stroke="#444"><rect x=".5" y=".5" width="10.500" height="10.500" rx="1.500"/><path d="M5 2.500h4v4H5zM3 5h4v4H3z"/><rect x="14.500" y=".5" width="10.500" height="10.500" rx="1.500"/><path d="M17 3l5.500 5.500M22.500 3L17 8.500" stroke-width="2"/></g></svg></div>
<div class="ptools"><svg><use href="#brush"/></svg><svg><use href="#addg"/></svg><svg><use href="#eye"/></svg><svg><use href="#filter"/></svg><svg><use href="#eps"/></svg><i class="dd off"></i><svg><use href="#down"/></svg><svg><use href="#up"/></svg><svg><use href="#rem"/></svg></div>
<div class="tree">
<div class="row top"><i class="ex open"></i><i class="ck y"></i><svg class="ti"><use href="#polyl"/></svg><strong>Recensement INSEE 2011 - population légale totale</strong></div>
<div class="row cls"><i class="ck y"></i><i class="sw s1"></i><span>5.0000 - 2397.0000</span></div>
<div class="row cls"><i class="ck y"></i><i class="sw s2"></i><span>2397.0000 - 10439.0000</span></div>
<div class="row cls"><i class="ck y"></i><i class="sw s3"></i><span>10439.0000 - 34837.0000</span></div>
<div class="row cls"><i class="ck y"></i><i class="sw s4"></i><span>34837.0000 - 243199.0000</span></div>
<div class="row cls"><i class="ck y"></i><i class="sw s5"></i><span>243199.0000 - 455002.0000</span></div>
<div class="row"><i class="ex"></i><i class="ck"></i><i class="ti"></i><strong class="dim">Etiquettes cours d'eau principaux (strahler&gt;3)</strong></div>
<div class="row"><i class="ex"></i><i class="ck"></i><i class="ti box"></i><strong class="dim">Communes du Bassin</strong></div>
<div class="row"><i class="ex open"></i><i class="ck y"></i><svg class="ti" viewBox="0 0 16 16"><path d="M1 2l5 11L11 2l4-.5" fill="none" stroke="#888" stroke-width="1.200"/><g fill="#fff" stroke="#888" stroke-width=".8"><circle cx="1.500" cy="2" r="1"/><circle cx="6" cy="13" r="1"/><circle cx="11" cy="2.500" r="1"/><circle cx="15" cy="1.500" r="1"/></g></svg><strong class="sel">Cours d'eau (tous)</strong></div>
<div class="row sub"><i class="ex shut"></i><i class="ck y"></i><i class="sw"></i><span>Cours d'eau</span></div>
<div class="row sub"><i class="ex"></i><i class="ck y"></i><svg class="ln" viewBox="0 0 18 6"><path d="M0 3h18" stroke="#5d93f0" stroke-width="2"/><path d="M3 3h3.500M8.500 3H12M14 3h3" stroke="#1b35b8" stroke-width="3"/></svg><span>Grands Canaux</span></div>
<div class="row sub"><i class="ex"></i><i class="ck y"></i><svg class="ln" viewBox="0 0 18 6"><path d="M0 3h18" stroke="#2d5fe0" stroke-width="2" stroke-dasharray="3 2"/></svg><span>Cours d'eau artificialisés et petits canaux</span></div>
</div>
</aside>
<div class="split"></div>
<div class="canvas">
<svg class="map" viewBox="9 15 2361 1485" preserveAspectRatio="none">
<defs>
<pattern id="brooks" width="210" height="190" patternUnits="userSpaceOnUse"><g fill="none" stroke="#9cb4ea" stroke-width="2.400"><path d="M10 20q20 30 15 60t25 40M25 80q-15 20-10 45M60 10q10 30 35 35t25 30q20 5 15 35M95 45q20-10 30-30M150 20q-10 30 10 50t10 50M160 70q25-5 35-25M30 150q30-15 50 5t40 10M80 155q-5-20 15-35M140 150q20 20 45 10t20-40M5 170q15 5 20 20M120 190q0-15 15-25M190 90q10 20 5 45"/></g></pattern>
<filter id="rough" x="0" y="0" width="1" height="1"><feTurbulence type="fractalNoise" baseFrequency=".05" numOctaves="2" seed="4"/><feDisplacementMap in="SourceGraphic" scale="17" xChannelSelector="R" yChannelSelector="G"/></filter>
<filter id="wind" x="0" y="0" width="1" height="1"><feTurbulence type="fractalNoise" baseFrequency=".022" numOctaves="2" seed="11"/><feDisplacementMap in="SourceGraphic" scale="38" xChannelSelector="R" yChannelSelector="G"/></filter>
<filter id="ragged" x="0" y="0" width="1" height="1"><feTurbulence type="fractalNoise" baseFrequency=".035" numOctaves="3" seed="8"/><feDisplacementMap in="SourceGraphic" scale="65" xChannelSelector="R" yChannelSelector="G"/></filter>
</defs>
<rect x="0" y="0" width="1300" height="1510" fill="#b3d4ff"/>
<g filter="url(#ragged)">
<g fill="#d6c8e6"><path d="M240 20l100 0-40 30-60 40zM240 90l40 0 0 40-40 30zM380 160l90-45 30 60-50 60-70-40zM70 70l30 0 0 60-30 0zM235 230l50 0 0 60-40 0zM270 350l40 0-5 70-50 20zM400 410l85-10-5 75-60 10zM60 450l60 20 10 60-50-10zM410 500l50 10-10 50-50-10zM160 560l90 30 0 40-90-40zM950 320l60 10 10 60-60-10zM1120 480l86-30 0 100-86 50zM620 490l90-20-20 50-60-10zM1080 680l120-10 0 50-100-20zM1020 220l40 10 0 60-50-20zM720 850l90-70 80 30-70 110-80-10zM780 1040l60-60 30 20-30 60 0 80-30 60-30-110zM260 780l40 0 0 60-40 0zM600 820l50 0 0 50-50-10zM50 1220l40-20 10 50-50 60zM50 1300l60 10 20 60-60-20zM1060 1060l60 10 20 70-60 30zM430 250l40 10 0 40-50-10zM1030 470l50 50 0 60-60-60zM340 1180l50 0 0 20-50 10zM360 1460l30 0 0 30-30 0zM1030 860l70 20-20 60-40-10zM570 700l60 0-30 50-40 0z"/></g>
<g fill="#e9c2d8"><path d="M490 20l90 0-30 35-50-20zM700 240l70-10 60 20-20 50-100 0zM720 310l100 20 40 80-50 20-90-60zM400 160l50 0 40 40-60 30zM345 690l60-45 30 60-20 30-70-10zM1150 650l56-10 0 60-50-10zM450 1160l40-20 10 40-30 20zM870 740l50-50 60 30 10 70-120-20zM20 1030l40 0-10 40-30 0zM1030 1170l70-20 10 80-60-20zM740 1290l30 10-10 30-30-10zM1035 1310l40 10-10 30-30 0z"/></g>
<g fill="#fdb5c1"><path d="M870 320l70-5 20 80-40 35-30-70zM940 700l50 10 0 90-100-10 10-40 40-10zM905 770l90-10-10 50-70-10z"/></g>
</g>
<rect x="0" y="0" width="1300" height="1510" fill="url(#brooks)" opacity=".7" filter="url(#ragged)"/>
<path d="M420 1420l15-15 30 5 40-5 60 35 45 25 60 10 25 18 30 14H410z" fill="#fff" filter="url(#rough)"/>
<path d="M1190 990l30-5v20z" fill="#fff"/>
<g class="thin" filter="url(#wind)">
<path d="M150 20l-30 50 10 60-30 70M220 20l-45 80-25 60M170 60l30-30M195 90l-10 40 25 15 30-10M300 80l60 40 50 0 60-20M280 140l50-15 50 10 60-35M330 70l50-10 40 10 50-10M290 60l30 50-10 20M560 130l60-60 60-20M590 30l40 60 60 10 40-20M540 60l30-35M450 200l40-60 30-70M480 190l70-60 20-40M370 170l30-40 80-10M620 95l-50 60M660 140l40-40 60-30M840 110l60-30 40-10M840 50l30 30 30-10M880 120l80-60M790 160l50-30 40-30M700 230l60-60 30-40M920 130l60-15 40-15M1010 60l40 0 35 40M965 15l0 60M900 230l60-70 60-30M830 260l60-70M950 240l80-40 40-40M1080 160l20 20-30 60M1190 120l10 60-20 30 10 50M680 250l40-50 60-20"/>
<path d="M20 290l30 30 20 50M40 400l-15 60 30 40M30 510l30 10 30 50M150 90l-30-20M75 140l0 70M115 250l-20 60 10 40M280 190l40 60-10 40M340 180l5 50M390 190l-10 60M420 200l-30 90M310 300l40 40 10 50M440 330l-50 50M480 270l20 40-30 60M530 300l0 60-20 30M620 330l-40 80 20 50 40-20 50-60M660 330l-30 50-40 20M600 460l50-80 40-10M650 330l-20-15M580 500l50 0 60-40 60 20M680 580l40-60 70-30 30 10M700 590l30-50 80-20M720 600l60-50 60-10M740 605l40-30 60-10M660 620l50-70M600 580l60 50 60 20 60-20M870 500l30-40 40 0M890 540l40-30 30 20M900 560l50-30 30 40M960 330l50 40 60 40M970 310l40 60M930 340l60 60 20 30M1060 340l40 40 0 50M1000 430l50-20 60 10M1150 350l-10 50M1100 520l20-40 30-10M1040 560l60 10M1020 640l-20 60-30 50M960 640l80 10 60 30 30 60M980 700l80 20 60 40M1000 740l90 30 50 60M1110 620l-10 60 50 20M840 630l-60 60-60 10M880 660l-70 60-20 60M900 700l-80 80-60 20M700 740l60-40 20-60M620 560l30 90 0 60M610 660l30 60-20 60M440 570l20 60-10 60M350 500l20 30 10 50M300 570l40 10 20 80M310 580l-20 60 20 60 20 60M280 600l0 80 40 60-20 70M180 600l-5 100-15 60M130 500l20 40 0 40M90 520l0 60 30 30M50 560l40 60 20 40M20 590l50 60 60 50M20 640l70 60M200 620l-30 70 0 90M350 740l30 10 20-20M360 770l20-40M480 640l-30 60-20 80M560 620l-20 50-50 50M510 580l0 60 30 20"/>
<path d="M130 790l60 30 0 60M100 770l30 80 30 50M150 830l20 60M180 880l10 80 10 70M340 800l-20 80 20 60-20 70M360 880l-20 60-30 90M450 850l10 60-30 70-50 30M470 820l30 60-20 70-50 60M540 810l-20 60 30 60-70 80-80 50M600 830l-60 50-40 60M650 850l20 60-40 60-60 30M680 790l0 60 20 30M570 870l-70 80-60 50M560 1000l-90 60-80 30-80 40M700 970l-80 40-120 30-100 60M660 1020l-100 30-90 40-110 50M740 1010l-60 20M800 870l-90 60 30 20M850 830l-60 90-60 40M830 820l-90-20M860 800l-80-10-60 20M880 850l-60 60-30 60M760 1100l40-50 0-60M820 1030l20 60 40 40M850 1010l30 70 0 50M900 980l20-40 10-50M970 1000l30-50 30-60M960 970l60-10 50 60M980 850l60 60 10 70M1000 830l80 80 60 30 40 60M1030 820l80 60 96 20M1010 790l90 30 106 40M1010 770l60-20 60 60 60 30M1150 960l-30 60 50 60M1160 1130l46 0M1090 1050l10 60-30 70M1000 1020l-20 70-40 20M1040 1090l-40 50 0 60M1020 1200l-30-60-50-40M1110 1150l-40 60M1130 1200l20 70-10 40M1180 1230l-20 60 20 60-50 20-10 50M1206 1290l-40 40M1060 1260l60-30 50 30M1065 1330l60 0 60 60M1050 1320l-60 10-70 20M760 1290l60-10 60 30M770 1330l60 20 70 0M790 1400l-60-20-60 10M720 1280l-40 70-80-10-50 50-20-60-10-70-20-60M550 1260l-10-30 50-20M590 1240l20-50M500 1210l-20 60 0 60M440 1250l20-20 30 0M340 1220l-40 30-10 60-20 20M370 1270l-10 50-30 20 0 50M280 1220l30-10M380 1260l-20 0M180 1400l40-10M230 1360l60 30 40 60 50 0M320 1500l0-40 40-20M360 1440l-50-20M590 1460l30-60 50-10M680 1360l-30 60 20 60M730 1400l-30 50M820 1460l-50-30M850 1400l0 60 50 40M1010 1440l-60 60M1000 1340l-20 50-60-20M1090 1440l20-50 50-20M1150 1500l-30-60M1206 1440l-60 30M20 1430l60-10 50 30M20 1350l50-20 60 0 60-30M20 1300l60-10 60-60M60 1430l-20-30M140 1400l60 0M20 1230l60-30 30-60M150 1180l-30-30-10-80M110 920l-30 80 10 60M100 890l20 80 0 80M280 1000l-10 60M650 1180l60 20 60 20M640 1160l60 0M730 1100l20 60 60 30-20 80M760 1170l80-20M810 1250l-30-10M880 1170l-60 20M340 1150l60-60 90-10M300 1170l160-20 120 10 30-20M480 1120l80-10 60 20"/>
</g>
<g class="med" filter="url(#rough)"><path d="M103 15L95 70 85 100 100 160 140 205 120 232 75 230M300 165V220L325 270V340L310 380 330 440 360 470 380 450M495 235L535 280 520 300 510 370 495 410 505 480 490 560 500 625M850 25L800 45 765 75 745 130 690 170 650 210 540 210 490 235M975 85L900 145 840 170 800 185 740 215 690 240 650 260 580 275M1070 110L1000 130 950 165 900 200 870 240 790 270 775 300M725 50L640 110 570 150 530 205M1145 100L1080 160 1050 220 960 285M1110 330L1115 380 1150 425 1206 420M900 400L960 440 1060 465 1130 465 1206 450M880 600L960 620 1060 690 1130 730 1206 775M110 335L115 400 140 500 145 570M190 320L150 420 185 540 190 600 165 680V750M270 470L340 520 370 530 400 470M105 770L180 810 200 870 205 950 195 1110M310 780L320 870 300 950 290 1060 240 1180M800 930L730 960 640 985 540 1025 520 1010 570 950 630 880 640 830M920 870L880 930V990L910 1050 930 1120 970 1190 940 1200 975 1260M780 1050L820 1110 870 1150 910 1200 880 1230 875 1275 945 1290 905 1330V1360M990 800L1050 870 1100 930 1150 970 1206 1055M240 1200L238 1300 220 1360 200 1430 160 1460 75 1475 72 1500M230 1360L255 1400V1500M415 1350L385 1400V1500M800 1375L850 1380 920 1430 985 1430 1040 1420M1050 1430L1120 1400 1206 1380M960 690L985 720 990 780M10 350L25 400M15 1060L12 1120 15 1200M60 830L100 890 120 960 130 1050 150 1130 180 1170"/></g>
<g class="big" filter="url(#rough)"><path d="M232 15L237 50 262 85 245 120V150L285 158 330 158 360 180 400 188 425 190 435 225 460 240 495 235 540 262 580 280 605 310 640 320 700 305 720 298 775 300 790 285 830 288 855 310 925 318 980 300 1040 318 1110 325 1135 335 1150 300 1145 262 1206 265M250 85L270 55 300 40 350 35 390 22 420 15M490 15L540 25 575 18M245 150V185L220 215 215 250 190 300 180 328 110 335 100 378 70 385 65 420 80 460 105 500 125 540 130 600 125 650 150 710 155 750M215 235L235 300 230 360 220 440 205 480 212 560 220 600 240 660V720L228 780V860L215 970M235 225L262 260 268 320 258 400 265 480V600L270 680 275 750 280 800 270 900 245 1010 222 1100 217 1190M460 240V300L410 375 425 450 455 490 460 535 420 575 415 640 400 680 390 720 412 745 418 780 405 850 380 900 370 990 330 1060 280 1150 245 1190M605 310L580 370 550 395 520 435 540 500 570 550 590 610 575 640 520 690 505 740 480 770 460 800 430 870 425 920 380 990 300 1110 250 1180M755 390L750 430 720 460 650 510 605 560V640L600 700 560 750 535 790 510 830 495 880 485 920 430 980 370 1050 290 1130 250 1185M720 300L718 340 755 390 790 420 800 460 825 510 850 580 845 620 810 680 760 710 715 745 690 770 650 815 600 860 565 900 560 940 500 1010 430 1070 320 1130 250 1185M850 580L885 600 900 640 935 690 940 730 955 770 945 820 900 850 870 890 840 930 790 990 720 1040 670 1060 570 1070 540 1095 480 1105 420 1130 320 1150 250 1185M850 300L870 350 900 375 905 440 920 465 980 490 1015 550 1060 580 1110 590 1165 610 1195 645M1110 590L1150 555 1206 545M875 890L860 940 840 980 790 1030 740 1100 640 1120 605 1160 590 1185 480 1190 420 1180 360 1210 245 1205M360 1210L370 1240 400 1255 415 1300 430 1345 475 1400 460 1440 440 1500M640 1125L630 1170 650 1245 710 1255 745 1290 770 1340 790 1390 775 1450 772 1500M935 840L950 900 960 950 1000 1010 1030 1020 1045 1070 1050 1140 1065 1200 1055 1270V1320L1070 1370 1045 1430 1080 1475 1115 1500M1000 1010L1070 1030 1110 1060 1145 1110 1140 1180 1150 1210 1206 1225M10 640L30 680 85 710 155 750M15 770L50 850 60 960V1080L70 1150 100 1230 150 1290 200 1335M10 680L45 730 75 770 95 830 125 880 150 950V1060L170 1130 185 1200 165 1250 200 1280M10 470L45 570 100 610 130 640M10 165L27 200 20 265"/></g>
<g class="canal"><path d="M265 172h80l60 20 45 5 10 35M740 320l55 60 50 30 10 90 40 80M900 610l30 80 10 60 30 40M890 790l-60 60-30 70-80 120-70 70M880 900l-60 90-140 80M985 800l60 80 80 40 70 65M25 780l15 120 0 130M95 930l-20 90 0 130M385 810l-25 80-40 70-20 90-20 60M200 1110l0 60M240 1200v120M590 285l70 15M820 410l60-20"/></g>
<path d="M2290 90h80v1410h-80z" fill="#fff"/>
<path d="M2290 90h78l2 50-16 44-2 66-26 4 18 36-22 10-24-16 46 56-12 10-22 3-2 15-18 4z" fill="#b3d4ff"/>
<path d="M2368 90l0 50-16 40 4 40-6 30-24 5M2300 250q30 10 40 40M2298 285l50 30 10 20M2298 320l40 15M2360 240l6 40M2330 90q20 30 4 70l-20 20" fill="none" stroke="#8fa5f0" stroke-width="4"/>
</svg>
</div>
</div>

<footer class="status">
<span class="search"><svg viewBox="0 0 14 14"><circle cx="5.500" cy="5.500" r="4" fill="none" stroke="#888" stroke-width="1.300"/><path d="M8.500 8.500l4.500 4.500" stroke="#888" stroke-width="1.600"/></svg>Taper pour trouver (Ctrl+K)</span>
<span class="pre">Prê</span>
<span class="clip c1"><span>Coordonnée</span></span>
<span class="field coord">564798,6366682</span>
<svg class="mouse" viewBox="0 0 16 16"><path d="M4 5l5-3 4 7q1 5-3 5-2 0-4-4z" fill="#bbb" stroke="#333"/><path d="M1 6l6 8M2 3l4 1M2 9l7-4M7 8l5-2M8 11l6-4M14 3l-4 5" stroke="#222" stroke-width="1.200"/></svg>
<span class="clip c2"><span>Échelle</span></span>
<span class="field scale">1:2098364<i></i></span>
<svg class="lock" viewBox="0 0 12 16"><path d="M3 7V4.500a3 3 0 0 1 6 0V7" fill="none" stroke="#999" stroke-width="1.500"/><rect x=".5" y="6.500" width="11" height="8.500" rx="1" fill="#555"/><path d="M1 9h10M1 12h10" stroke="#777"/></svg>
<span class="clip c3"><span>Loupe</span></span>
<span class="field zoom">150%<svg viewBox="0 0 14 10"><path d="M4 0h10v10H4L0 5z" fill="#999"/><path d="M5.500 2.500l5 5M10.500 2.500l-5 5" stroke="#fff" stroke-width="1.200"/></svg><i></i></span>
<i class="grip"></i>
</footer>
</section>

<div class="menu main">
<p><span><u>C</u>ontours administratifs</span></p><p class="on"><span><u>B</u>assins hydrographiques</span></p><p><span><u>C</u>ours d'eau</span></p><p><span><u>L</u>acs et plans d'eau</span></p><p><span><u>Z</u>ones Humides</span></p><p><span><u>L</u>ittoral</span></p><hr>
<p><span><u>G</u>éologie</span></p><p><span><u>H</u>ydrogéologie</span></p><p><span><u>P</u>édologie (Sols)</span></p><hr>
<p><span><u>O</u>ccupation du Sol</span></p><p><span><u>R</u>eliefs - Altimétrie - MNT</span></p><p><span><u>S</u>cans et Orthophotographies</span></p><hr>
<p><span><u>Z</u>onages réglementaires</span></p><p><span><u>Z</u>ones protégées Faune-Flore (geoportail WMTS)</span></p><p><span><u>P</u>érimètres de Gestion Concertée</span></p><hr>
<p><span><u>A</u>EP Eau Potable</span></p><p><span><u>A</u>ménagement de rivière</span></p><p><span><u>I</u>nondations</span></p><p><span><u>P</u>ollution diffuses</span></p><p><span><u>C</u>ontinuité écologique (trame bleu)</span></p><p><span><u>D</u>onnées externes</span></p><hr>
<p><span><u>H</u>abillage de carte</span></p><hr>
<p><span><u>A</u>griculture</span></p><p><span><u>C</u>ollectivités - AEP</span></p><p><span><u>C</u>ollectivités - Assainissement</span></p><p><span><u>I</u>ndustrie</span></p><p><span><u>O</u>bstacles à l'écoulement</span></p><p><span><u>H</u>ydroélectricité</span></p><p><span><u>S</u>ites de mesures</span></p>
</div>
<div class="menu sub">
<p><svg><use href="#polyl"/></svg><span>Zones hydrographiques</span></p><p><svg><use href="#polyl"/></svg><span>Sous secteurs hydrographiques</span></p><p class="on"><svg><use href="#polyl"/></svg><span>Secteurs hydrographiques</span></p><p><svg><use href="#polyl"/></svg><span>Ré</span></p><p><svg><use href="#polyl"/></svg><span>Ba</span></p><p><i></i><span><u>C</u>o</span></p><p><i></i><strong>To</strong></p>
</div>
<div class="tooltip">Bd carthage -niveau d'agrégation 2<br>Mise à jour annuelle gérée par les<br>agences et IGN.<br><br>Remontées d'anomalies à Jean-Marc<br>Clotes<br><br>DONNEES GRATUITE DISPONIBLE SUR<br>SANDRE</div>
<svg class="pointer" viewBox="0 0 12 19"><path d="M1 1v14l3.200-3 2.300 5.500 2.500-1-2.300-5.300H11z" fill="#111" stroke="#fff"/></svg>
</main>
</body>
</html>
```
FILE: styles.css
```css
* { box-sizing: border-box; }
body { margin: 0; font: 12px/15px "DejaVu Sans", sans-serif; color: #141414; overflow: hidden; }
u { text-decoration: underline; text-decoration-thickness: 1px; text-underline-offset: 2px; }
i { font-style: normal; flex: none; }
.defs { display: block; height: 0; }
.screen { position: relative; width: 1495px; height: 730px; background: #f1f0ef; overflow: hidden; }
.window { width: 1227px; height: 730px; display: flex; flex-direction: column; background: #efebe8; border-radius: 0 7px 0 0; box-shadow: 2px 3px 16px 2px rgba(0,0,0,.5); overflow: hidden; }

.titlebar { height: 28px; flex: none; display: flex; justify-content: flex-end; align-items: center; background: linear-gradient(#5c5a55, #3f3e3a); }
.title { flex: 1; padding-left: 53px; text-align: center; font: bold 13px/25px "Liberation Sans", sans-serif; letter-spacing: .62px; color: #dfdbd2; }
.controls { display: flex; gap: 3px; padding-right: 6px; margin-left: -6px; margin-top: -2px; }
.wb { width: 17px; height: 17px; border-radius: 50%; background: #84827c; border: 1px solid #373632; display: flex; align-items: center; justify-content: center; }
.min::before { content: ""; width: 7px; height: 2px; margin-top: 4px; background: #3b3a36; }
.max::before { content: ""; width: 8px; height: 8px; border: 2px solid #3b3a36; }
.close { background: #f0583a; }
.close svg { width: 15px; height: 15px; }

.menubar { height: 20px; flex: none; padding-left: 8px; display: grid; grid-template-columns: 49px 50px 38px 59px 86px 73px 61px 53px 117px 62px 64px 81px 41px 44px auto; border-bottom: 1px solid #d0cbc7; line-height: 21px; white-space: nowrap; }
.menubar .on { background: #048ac0; color: #d9f1ff; justify-self: start; margin-left: -4px; padding: 0 4px; height: 20px; }

.bar { height: 39px; flex: none; display: flex; align-items: center; background: linear-gradient(#f7f4f2, #ece8e5); border-bottom: 1px solid #b9b3af; overflow: hidden; }
.bar b { width: 33px; height: 32px; flex: none; display: flex; align-items: center; justify-content: center; border-radius: 3px; border: 1px solid transparent; font-weight: normal; }
.bar b.on { background: #dcd8d5; border-color: #aba6a2; }
.bar svg { width: 24px; height: 24px; flex: none; overflow: visible; }
.h { width: 15px; height: 22px; display: flex; justify-content: center; }
.h.first { width: 10.5px; }
.h::before { content: ""; width: 5px; height: 22px; margin-left: 2px; background: radial-gradient(circle, #b5b0ac 0 .7px, transparent 1px) 0 0 / 2.500px 3px; }
.h.first::before { margin-left: 0; }
.dd { width: 12.2px; display: flex; justify-content: center; }
.dd::before { content: ""; border: 4.5px solid transparent; border-top: 5px solid #444; border-bottom: 0; }
.dd.off::before { border-top-color: #b5b1ae; }

.work { flex: 1; min-height: 0; display: flex; }
.panel { width: 432px; display: flex; flex-direction: column; }
.ptitle { height: 19px; padding: 0 2px; display: flex; justify-content: space-between; align-items: center; }
.pbtn { width: 26px; height: 12px; }
.ptools { height: 31px; display: flex; align-items: center; padding: 0 0 1px 6px; gap: 9px; }
.ptools svg { width: 16px; height: 16px; }
.ptools .dd { width: 9px; margin: 0 -4px 0 -6px; }
.ptools svg:nth-child(5) { width: 18px; }
.tree { flex: 1; background: #fff; border: 1px solid #b3aca8; border-left: 0; white-space: nowrap; }
.row { height: 18px; display: flex; align-items: center; }
.row.top { height: 18px; padding-top: 1px; }
.cls { height: 20px; padding-left: 42px; }
.row.sub { padding-left: 20px; }
.ex { width: 22px; display: flex; padding-left: 4px; }
.ex.open::before { content: ""; border: 5px solid transparent; border-top: 5px solid #444; border-bottom: 0; }
.ex.shut::before { content: ""; margin-left: 2px; border: 5px solid transparent; border-left: 5px solid #444; border-right: 0; }
.ck { width: 14px; height: 14px; margin-right: 6px; background: #fff; border: 1px solid #aaa5a2; display: flex; justify-content: center; }
.ck.y { border-color: #99938f; }
.ck.y::before { content: ""; width: 4px; height: 8px; margin-top: 1px; border: solid #111; border-width: 0 2px 2px 0; transform: rotate(34deg); }
.ti { width: 16px; height: 16px; margin-right: 5px; }
.ti.box { border: 1px solid #bbb; }
.sw, .ln { width: 18px; height: 18px; flex: none; margin-right: 6px; }
.ln { height: 6px; }
.s1 { background: #b3d4ff; } .s2 { background: #cccdec; } .s3 { background: #dcc5dd; } .s4 { background: #f3bfce; } .s5 { background: #ffb8ba; }
.dim { color: #848484; font-style: italic; }
.sel { flex: 1; height: 18px; line-height: 16px; margin-left: -1px; padding-left: 1px; border: 1px solid #a6bfca; border-radius: 2px; background: linear-gradient(#eaf5fa, #d8ebf4); text-decoration: underline; text-underline-offset: 2px; }
.top strong, .dim { margin-left: 1px; }
.split { width: 6px; flex: none; }
.canvas { flex: 1; border: solid #a5a09d; border-width: 1px 0 1px 1px; display: flex; }
.map { width: 787px; height: 495px; display: block; }
.map .thin, .map .med, .map .big, .map .canal { fill: none; stroke-linejoin: round; stroke-linecap: round; }
.thin { stroke: #8ba3e6; stroke-width: 3.4; }
.med { stroke: #8099f0; stroke-width: 6; }
.big { stroke: #7b95fb; stroke-width: 12; }
.canal { stroke: #7086d8; stroke-width: 6; stroke-dasharray: 1 11; }

.status { height: 30px; flex: none; display: flex; align-items: center; padding: 1px 0 0 2px; white-space: nowrap; }
.search, .field { height: 23px; background: #fff; border: 1px solid #a8a29e; border-radius: 3px; display: flex; align-items: center; }
.search { width: 275px; padding-left: 7px; gap: 7px; color: #8b8b8b; margin-right: 8px; }
.search svg { width: 14px; height: 14px; }
.pre { width: 28px; }
.clip { overflow: hidden; display: flex; }
.clip span { margin-left: -3px; }
.c1 { width: 68px; margin-right: 3px; }
.c1 span { letter-spacing: -.1px; }
.coord { width: 127px; justify-content: center; }
.mouse { width: 16px; height: 16px; margin: 0 12px 0 4px; }
.c2 { width: 40px; margin-right: 2px; }
.scale { width: 95px; padding-left: 3px; justify-content: space-between; }
.scale i { width: 20px; height: 21px; border-left: 1px solid #b9b4b0; display: flex; align-items: center; justify-content: center; }
.scale i::before { content: ""; border: 4px solid transparent; border-top: 5px solid #555; border-bottom: 0; }
.lock { width: 12px; height: 16px; margin: 0 8px 0 13px; }
.c3 { width: 34px; margin-right: 2px; }
.zoom { width: 91px; padding-left: 4px; }
.zoom svg { width: 13px; height: 10px; margin-left: 15px; }
.zoom i { height: 21px; width: 12px; margin-left: 11px; border-left: 1px solid #b9b4b0; display: flex; flex-direction: column; justify-content: center; align-items: center; gap: 4px; }
.zoom i::before, .zoom i::after { content: ""; border: 4px solid transparent; border-bottom: 4px solid #444; border-top: 0; }
.zoom i::after { border-top: 4px solid #444; border-bottom: 0; }
.grip { width: 14px; height: 10px; margin: 14px 0 0 auto; background: radial-gradient(circle, #b5b0ac 0 .7px, transparent 1px) 0 0 / 3px 3px; }

.menu { position: absolute; background: #fff; outline: 1px solid #8d8986; outline-offset: -1px; box-shadow: 1px 1px 2px rgba(0,0,0,.25); white-space: nowrap; }
.menu p { margin: 0; height: 23px; padding-top: 2px; display: flex; align-items: center; }
.menu p.on { background: #048ac0; color: #d9f1ff; }
.menu hr { margin: 0 5px; height: 2px; border: 0; border-top: 1px solid #b7b3b0; }
.main { left: 838px; top: 48px; width: 364px; height: 679px; }
.main p { padding: 2px 5px 0 28px; justify-content: space-between; }
.main p::after { content: ""; margin-top: -2px; border: 5px solid transparent; border-left: 5px solid #444; border-right: 0; }
.main p.on::after { border-left-color: #c9ecff; }
.menu.sub { left: 1201px; top: 71px; width: 287px; height: 161px; }
.menu.sub p { padding-left: 6px; }
.menu.sub svg, .menu.sub i { width: 18px; height: 14px; margin: -2px 4px 0 0; }
.tooltip { position: absolute; left: 1243px; top: 137px; width: 270px; height: 141px; padding: 3px 3px 0; border: 1px solid #111; background: #ffffdc; color: #0c0c0c; font-weight: bold; white-space: nowrap; box-shadow: 0 3px 14px rgba(0,0,0,.4); }
.pointer { position: absolute; left: 1240px; top: 119px; width: 12px; height: 19px; }
```
